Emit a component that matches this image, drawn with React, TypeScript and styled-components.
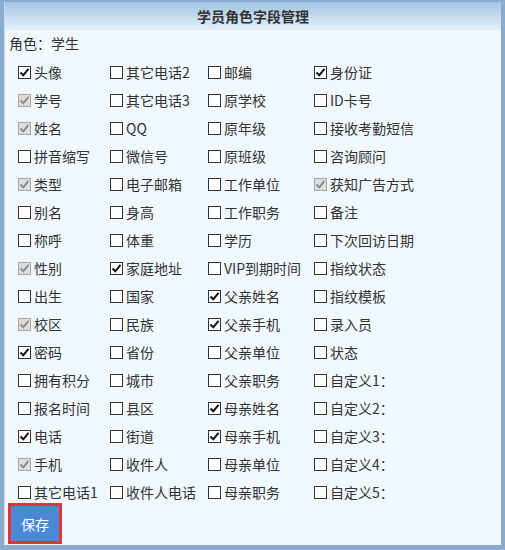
import React from "react";
import styled, { createGlobalStyle } from "styled-components";

const Global = createGlobalStyle`
  html, body { margin: 0; padding: 0; background: #8aabcd; }
  body { font-family: "Noto Sans CJK SC", "Microsoft YaHei", sans-serif; }
  * { box-sizing: border-box; }
`;

const Frame = styled.div`
  width: 505px;
  height: 550px;
  background: #8aabcd;
  padding: 2px 4px 5px 4px;
  display: flex;
  flex-direction: column;
`;

const Panel = styled.div`
  flex: 1;
  background: #f0f8fe;
  display: flex;
  flex-direction: column;
  border-left: 1px solid #c9dcef;
`;

const Header = styled.div`
  height: 28px;
  background: linear-gradient(to bottom, #a2c3e3 0%, #c7dcef 55%, #e4eef8 100%);
  display: flex;
  align-items: center;
  justify-content: center;
  font-size: 14px;
  font-weight: bold;
  color: #333;
  line-height: 28px;
`;

const Role = styled.div`
  height: 28px;
  line-height: 26px;
  padding-left: 4px;
  font-size: 14px;
  color: #333;
`;

const Grid = styled.div`
  margin-top: 4px;
  display: grid;
  grid-template-columns: 92px 98px 106px auto;
  grid-auto-rows: 20px;
  row-gap: 8px;
  padding-left: 13px;
`;

const Cell = styled.label`
  display: flex;
  align-items: center;
  gap: 3px;
  font-size: 14px;
  color: #333;
  line-height: 20px;
  white-space: nowrap;
`;

const Box = styled.span<{ $disabled?: boolean }>`
  width: 13px;
  height: 13px;
  flex: none;
  border: 1px solid ${(p) => (p.$disabled ? "#a8a8a8" : "#333")};
  background: ${(p) => (p.$disabled ? "#dcdcdc" : "#fff")};
  display: flex;
  align-items: center;
  justify-content: center;
`;

const ButtonWrap = styled.div`
  margin: 1px 0 0 3px;
  width: 54px;
  border: 3px solid #e23636;
`;

const SaveButton = styled.button`
  display: block;
  width: 48px;
  height: 35px;
  border: none;
  background: #4a89d5;
  color: #fff;
  font-family: inherit;
  font-size: 14px;
  padding: 0;
`;

type State = 0 | 1 | 2; // 0 none, 1 checked, 2 checked disabled

const items: [string, State][][] = [
  [["头像", 1], ["其它电话2", 0], ["邮编", 0], ["身份证", 1]],
  [["学号", 2], ["其它电话3", 0], ["原学校", 0], ["ID卡号", 0]],
  [["姓名", 2], ["QQ", 0], ["原年级", 0], ["接收考勤短信", 0]],
  [["拼音缩写", 0], ["微信号", 0], ["原班级", 0], ["咨询顾问", 0]],
  [["类型", 2], ["电子邮箱", 0], ["工作单位", 0], ["获知广告方式", 2]],
  [["别名", 0], ["身高", 0], ["工作职务", 0], ["备注", 0]],
  [["称呼", 0], ["体重", 0], ["学历", 0], ["下次回访日期", 0]],
  [["性别", 2], ["家庭地址", 1], ["VIP到期时间", 0], ["指纹状态", 0]],
  [["出生", 0], ["国家", 0], ["父亲姓名", 1], ["指纹模板", 0]],
  [["校区", 2], ["民族", 0], ["父亲手机", 1], ["录入员", 0]],
  [["密码", 1], ["省份", 0], ["父亲单位", 0], ["状态", 0]],
  [["拥有积分", 0], ["城市", 0], ["父亲职务", 0], ["自定义1：", 0]],
  [["报名时间", 0], ["县区", 0], ["母亲姓名", 1], ["自定义2：", 0]],
  [["电话", 1], ["街道", 0], ["母亲手机", 1], ["自定义3：", 0]],
  [["手机", 2], ["收件人", 0], ["母亲单位", 0], ["自定义4：", 0]],
  [["其它电话1", 0], ["收件人电话", 0], ["母亲职务", 0], ["自定义5：", 0]],
];

function Check({ state }: { state: State }) {
  return (
    <Box $disabled={state === 2}>
      {state !== 0 && (
        <svg width="11" height="11" viewBox="0 0 11 11">
          <path
            d="M1.5 5.5 L4.3 8.3 L9.5 1.8"
            fill="none"
            stroke={state === 2 ? "#8c8c8c" : "#111"}
            strokeWidth="2"
          />
        </svg>
      )}
    </Box>
  );
}

export default function App() {
  return (
    <>
      <Global />
      <Frame>
        <Panel>
          <Header>学员角色字段管理</Header>
          <Role>角色：学生</Role>
          <Grid>
            {items.flat().map(([label, state], i) => (
              <Cell key={i}>
                <Check state={state} />
                {label}
              </Cell>
            ))}
          </Grid>
          <ButtonWrap>
            <SaveButton>保存</SaveButton>
          </ButtonWrap>
        </Panel>
      </Frame>
    </>
  );
}
